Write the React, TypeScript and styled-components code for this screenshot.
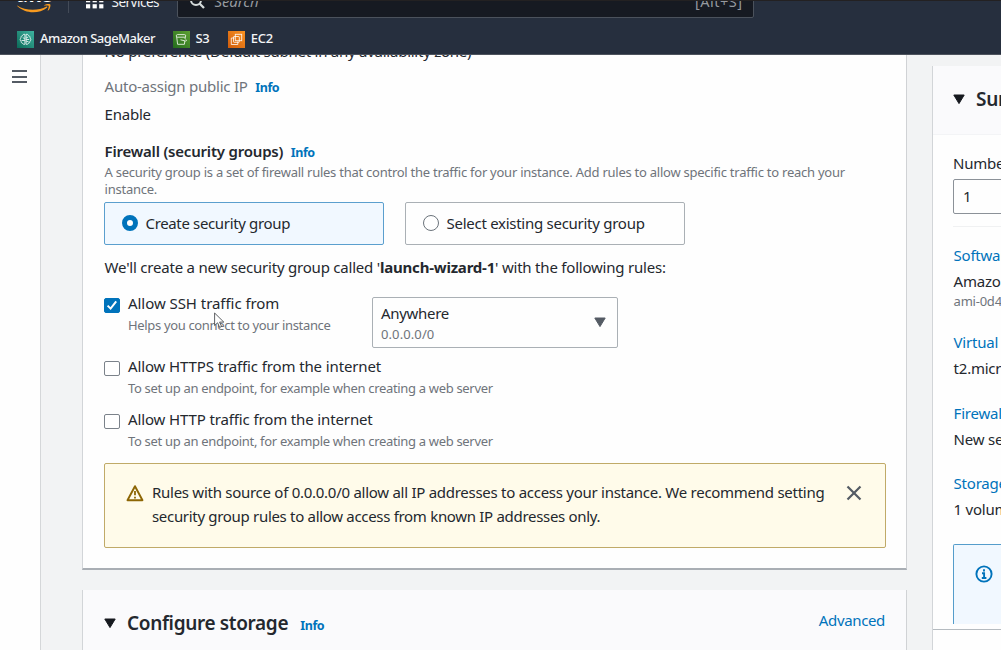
import React from "react";
import styled, { createGlobalStyle, css } from "styled-components";

const GlobalStyle = createGlobalStyle`
  * { box-sizing: border-box; }
  body {
    margin: 0;
    background: #f2f3f3;
    font-family: "Noto Sans", "Open Sans", sans-serif;
    color: #16191f;
    overflow: hidden;
  }
`;

interface TextProps {
  $size?: number;
  $line?: number;
  $track?: number;
  $color?: string;
  $bold?: boolean;
  $top?: number;
}

const textStyles = css<TextProps>`
  font-size: ${(p) => p.$size ?? 15}px;
  line-height: ${(p) => p.$line ?? 22}px;
  letter-spacing: ${(p) => p.$track ?? -0.23}px;
  color: ${(p) => p.$color ?? "#24282e"};
  font-weight: ${(p) => (p.$bold ? 600 : 400)};
  margin-top: ${(p) => p.$top ?? 0}px;
  margin-bottom: 0;
  white-space: nowrap;
`;

const Line = styled.div<TextProps>`
  ${textStyles}
`;

const Span = styled.span<TextProps>`
  ${textStyles}
`;

const Link = styled.a<TextProps>`
  ${textStyles}
  display: block;
  color: #0073bb;
  text-decoration: none;
`;

const Heading = styled.h2<TextProps>`
  ${textStyles}
  margin-left: 11px;
`;

const InfoLink = styled.a<{ $left?: number; $top?: number }>`
  margin-left: ${(p) => p.$left ?? 7.5}px;
  margin-top: ${(p) => p.$top ?? 0}px;
  font-size: 12.5px;
  line-height: 22px;
  letter-spacing: -0.4px;
  font-weight: 700;
  color: #0073bb;
`;

const Page = styled.div`
  width: 100%;
  height: 650px;
  display: flex;
  flex-direction: column;
  overflow: hidden;
`;

const Header = styled.header`
  flex: none;
  height: 55px;
  background: #262f3e;
  border-top: 1px solid #232122;
  border-bottom: 1px solid #4d535d;
  overflow: hidden;
`;

const NavRow = styled.div`
  height: 32px;
  margin-top: -15px;
  display: flex;
  align-items: stretch;
`;

const Logo = styled.div`
  width: 34px;
  height: 32px;
  margin-left: 17px;
  display: flex;
  flex-direction: column;
  align-items: center;
`;

const LogoWord = styled.span`
  color: #fff;
  font-size: 20px;
  line-height: 18px;
  height: 17px;
  letter-spacing: -0.8px;
  font-weight: 600;
`;

const NavDivider = styled.div`
  width: 1px;
  height: 27px;
  margin-left: 17px;
  background: #434b58;
`;

const Services = styled.div`
  display: flex;
  margin-left: 16.5px;
  width: 91.5px;
  gap: 8px;
`;

const SearchBox = styled.div`
  width: 577px;
  height: 32px;
  margin-left: -0.5px;
  padding: 0 10px 0 11px;
  display: flex;
  gap: 9px;
  background: #161a22;
  border: 1px solid #4b525c;
  border-radius: 2px;
`;

const SearchHint = styled.span`
  flex: 1;
  font-size: 15px;
  font-style: italic;
  line-height: 29px;
  letter-spacing: -0.1px;
  color: #95999f;
`;

const Shortcut = styled.span`
  font-size: 14.5px;
  line-height: 29px;
  letter-spacing: 0.5px;
  color: #95999f;
`;

const Favorites = styled.div`
  height: 20px;
  margin-top: 11px;
  padding-left: 17px;
  display: flex;
  align-items: center;
`;

const Favorite = styled.div<{ $gap: number }>`
  display: flex;
  align-items: center;
  gap: 6px;
  margin-right: ${(p) => p.$gap}px;
`;

const FavoriteName = styled.span<{ $track: number }>`
  padding-bottom: 2px;
  font-size: 13px;
  line-height: 18px;
  letter-spacing: ${(p) => p.$track}px;
  font-weight: 500;
  color: #f4f5f6;
  white-space: nowrap;
`;

const Body = styled.div`
  flex: 1;
  min-height: 0;
  display: flex;
  background: #f2f3f4;
`;

const Rail = styled.aside`
  flex: none;
  width: 41px;
  padding: 15px 0 0 12px;
  background: #fefefe;
  border-right: 1px solid #d5d7d9;
`;

const Bar = styled.div`
  width: 15px;
  height: 2px;
  margin-bottom: 3.5px;
  background: #545b64;
`;

const Main = styled.main`
  flex: none;
  width: 825px;
  margin-left: 41px;
  display: flex;
  flex-direction: column;
  gap: 20px;
  overflow: hidden;
`;

const Panel = styled.section`
  flex: none;
  background: #fefefe;
  border-left: 1px solid #d2d5d8;
  border-right: 1px solid #d0d2d5;
`;

const NetworkPanel = styled(Panel)`
  height: 515px;
  padding: 0 21px;
  border-bottom: 2px solid #a9aeb4;
  overflow: hidden;
`;

const NetworkText = styled.div`
  padding-left: 0.6px;
`;

const StoragePanel = styled(Panel)`
  height: 70px;
  padding: 19px 21px 0 21px;
  display: flex;
  align-items: flex-start;
  background: #fafafc;
`;

const Inline = styled.div<{ $top: number }>`
  display: flex;
  align-items: baseline;
  height: 22px;
  margin-top: ${(p) => p.$top}px;
`;

const Tiles = styled.div`
  display: flex;
  gap: 21px;
  margin-top: 5px;
`;

const Tile = styled.div<{ $on?: boolean }>`
  width: 280px;
  height: 43px;
  padding: 0 0 2px 17px;
  display: flex;
  align-items: center;
  gap: 8px;
  border-radius: 2px;
  border: 1px solid ${(p) => (p.$on ? "#5b9fce" : "#aab0b5")};
  background: ${(p) => (p.$on ? "#f1f8ff" : "#fefefe")};
`;

const Radio = styled.span<{ $on?: boolean }>`
  width: 16px;
  height: 16px;
  margin: 1px 0 0 -0.5px;
  border-radius: 50%;
  background: #fff;
  border: ${(p) => (p.$on ? "5px solid #0073bb" : "1px solid #6b737b")};
`;

const RuleRow = styled.div<{ $top: number }>`
  display: flex;
  margin-top: ${(p) => p.$top}px;
`;

const Rule = styled.div`
  display: flex;
  gap: 8px;
  width: 268px;
`;

const Box = styled.span<{ $on?: boolean }>`
  flex: none;
  width: 16px;
  height: 15px;
  margin-top: 5px;
  display: flex;
  border-radius: 2px;
  border: 1px solid ${(p) => (p.$on ? "#0073bb" : "#7b828a")};
  background: ${(p) => (p.$on ? "#0073bb" : "#fff")};
`;

const Select = styled.div`
  width: 246px;
  height: 51px;
  margin-top: 4px;
  padding: 4px 11px 0 8px;
  display: flex;
  justify-content: space-between;
  border: 1px solid #aab0b5;
  border-radius: 2px;
`;

const Arrow = styled.svg<{ $top: number }>`
  flex: none;
  margin-top: ${(p) => p.$top}px;
`;

const Alert = styled.div`
  width: 782px;
  height: 85px;
  margin-top: 13px;
  padding: 17px 23px 0 21px;
  display: flex;
  border: 1px solid #c0aa68;
  border-radius: 2px;
  background: #fffbea;
`;

const AlertText = styled.div`
  width: 695px;
  margin: -1px 0 0 8px;
`;

const Side = styled.aside`
  flex: none;
  width: 90px;
  margin: 11px 0 0 25px;
  border-left: 1px solid #d2d5d8;
  background: #fefefe;
  overflow: hidden;
`;

const SideHead = styled.div`
  height: 69px;
  padding: 20px 0 0 20px;
  display: flex;
  background: #fafafc;
  border-bottom: 1px solid #f3f4f6;
`;

const SideBody = styled.div`
  height: 494px;
  padding: 17px 0 0 20px;
  overflow: hidden;
`;

const NumberInput = styled.div`
  width: 120px;
  height: 35px;
  margin-top: 5px;
  padding: 0 0 1px 9px;
  display: flex;
  align-items: center;
  border: 1px solid #8b9198;
  border-radius: 2px;
`;

const Separator = styled.hr`
  margin: 12px 0 0;
  border: 0;
  height: 1px;
  background: #f0f1f2;
`;

const SideList = styled.div`
  padding-left: 0.6px;
`;

const SideNote = styled.div`
  width: 140px;
  height: 80px;
  margin-top: 24px;
  padding: 20px 0 0 21px;
  border: 1px solid #559dcb;
  border-bottom: 0;
  border-radius: 2px 2px 0 0;
  background: #f1f8ff;
`;

const SideFoot = styled.div`
  height: 26px;
  border-top: 1px solid #b5bbc0;
`;

const Advanced = styled(Link)`
  margin-left: auto;
`;

const Pointer = styled.svg`
  position: absolute;
  left: 214px;
  top: 312px;
`;

const muted = "#6f747b";

function DownArrow({ top, fill }: { top: number; fill: string }) {
  return (
    <Arrow $top={top} width="12" height="11" viewBox="0 0 12 11">
      <path d="M.8 1h10.400L6 9.600z" fill={fill} stroke={fill} strokeWidth="1" strokeLinejoin="round" />
    </Arrow>
  );
}

interface RuleOptionProps {
  on?: boolean;
  label: string;
  hint: string;
  track: number;
  hintTrack: number;
}

function RuleOption({ on, label, hint, track, hintTrack }: RuleOptionProps) {
  return (
    <Rule>
      <Box $on={on}>
        {on && (
          <svg width="14" height="13" viewBox="0 0 14 13">
            <path d="M2.600 6.600l3 3 5.600-7.200" fill="none" stroke="#fff" strokeWidth="2" />
          </svg>
        )}
      </Box>
      <div>
        <Line $line={20} $track={track}>{label}</Line>
        <Line $size={13} $line={18} $top={3} $track={hintTrack} $color={muted}>{hint}</Line>
      </div>
    </Rule>
  );
}

function ServiceIcon({ from, to, children }: { from: string; to: string; children: React.ReactNode }) {
  const id = "g" + from.slice(1);
  return (
    <svg width="17" height="17" viewBox="0 0 17 17">
      <defs>
        <linearGradient id={id} x1="0" y1="1" x2="1" y2="0">
          <stop offset="0" stopColor={from} />
          <stop offset="1" stopColor={to} />
        </linearGradient>
      </defs>
      <rect width="17" height="17" fill={`url(#${id})`} />
      <g fill="none" stroke="#fff" strokeOpacity=".88" strokeWidth=".9">{children}</g>
    </svg>
  );
}

function TopNav() {
  return (
    <Header>
      <NavRow>
        <Logo>
          <LogoWord>aws</LogoWord>
          <svg width="34" height="11" viewBox="0 0 34 11">
            <path d="M.3 2.400C8 7.800 21 8.200 29.500 3.600c.8-.3 1.200.5.5 1.100C22 11 8.500 11 .2 3z" fill="#f79a1f" />
            <path d="M27 2.200C29 .8 32.700.7 33.300 1.400c.5.8-.2 4.500-2.100 6.200-.4.3-.7.1-.5-.3.6-1.500 1.400-3.900.9-4.500-.5-.6-3-.4-4.300-.2-.5 0-.6-.2-.3-.4z" fill="#f79a1f" />
          </svg>
        </Logo>
        <NavDivider />
        <Services>
          <svg width="18" height="24" viewBox="0 0 18 24">
            {[0, 1, 2].map((r) =>
              [0, 1, 2].map((c) => (
                <rect key={`${r}${c}`} x={c * 6.600} y={6 + r * 6.100} width="4.200" height="4.200" fill="#fff" />
              ))
            )}
          </svg>
          <Line $size={13.5} $line={33} $track={-0.5} $color="#f1f2f3">Services</Line>
        </Services>
        <SearchBox>
          <svg width="17" height="24" viewBox="0 0 17 24">
            <circle cx="7" cy="13" r="5" fill="none" stroke="#d5dbdb" strokeWidth="2" />
            <path d="M10.500 16.500l4.500 4.500" stroke="#d5dbdb" strokeWidth="2.300" />
          </svg>
          <SearchHint>Search</SearchHint>
          <Shortcut>[Alt+S]</Shortcut>
        </SearchBox>
      </NavRow>
      <Favorites>
        <Favorite $gap={17.5}>
          <ServiceIcon from="#0b6a58" to="#3fb3a0">
            <path d="M7.900 3.300C6.300 3 5.500 4 5.400 4.800 4 5 3.700 6.200 4.100 7c-1.300.8-1.200 2.500 0 3.200-.2 1.300.7 2 1.600 2.100.4 1.200 1.500 1.400 2.200 1zM9.100 3.300c1.600-.3 2.400.7 2.500 1.500 1.400.2 1.700 1.400 1.300 2.200 1.300.8 1.200 2.500 0 3.200.2 1.300-.7 2-1.600 2.100-.4 1.200-1.500 1.400-2.200 1z" />
            <path d="M5.800 6.500l2 1.500M4.500 9.500h3.300M9.200 7l2-1M9.200 10l2.500 1M9.200 8.500h3" />
          </ServiceIcon>
          <FavoriteName $track={-0.54}>Amazon SageMaker</FavoriteName>
        </Favorite>
        <Favorite $gap={18.5}>
          <ServiceIcon from="#236b1d" to="#5da032">
            <rect x="3.300" y="3.600" width="9.400" height="2.600" rx="1.200" />
            <path d="M3.700 6l.9 7.300h6.800l.4-3.300M12.300 6l-.3 2M7.500 8.800l5 1.200c1.200.1 1.300-.8.300-1.600" />
          </ServiceIcon>
          <FavoriteName $track={-0.4}>S3</FavoriteName>
        </Favorite>
        <Favorite $gap={0}>
          <ServiceIcon from="#d05c0c" to="#f99221">
            <rect x="7.300" y="3.300" width="6.400" height="6.400" />
            <path d="M6.500 7H3.300v6.500h6.500v-3" />
            <rect x="5.500" y="5.500" width="5.800" height="5.800" rx=".6" />
          </ServiceIcon>
          <FavoriteName $track={-0.3}>EC2</FavoriteName>
        </Favorite>
      </Favorites>
    </Header>
  );
}

export default function App() {
  return (
    <>
      <GlobalStyle />
      <Page>
        <TopNav />
        <Body>
          <Rail>
            <Bar />
            <Bar />
            <Bar />
          </Rail>
          <Main>
            <NetworkPanel>
              <NetworkText>
                <Line $top={-15} $track={-0.25}>No preference (Default subnet in any availability zone)</Line>
                <Inline $top={13}>
                  <Span $color={muted}>Auto-assign public IP</Span>
                  <InfoLink>Info</InfoLink>
                </Inline>
                <Line $top={6}>Enable</Line>
                <Inline $top={15}>
                  <Span $bold $track={-0.2}>Firewall (security groups)</Span>
                  <InfoLink>Info</InfoLink>
                </Inline>
                <Line $size={13} $line={16.5} $track={-0.25} $color={muted} $top={2}>
                  A security group is a set of firewall rules that control the traffic for your instance. Add rules to allow specific traffic to reach your
                  <br />
                  instance.
                </Line>
              </NetworkText>
              <Tiles>
                <Tile $on>
                  <Radio $on />
                  <Span $track={-0.35}>Create security group</Span>
                </Tile>
                <Tile>
                  <Radio />
                  <Span $track={-0.27}>Select existing security group</Span>
                </Tile>
              </Tiles>
              <NetworkText>
                <Line $top={11} $track={-0.21}>
                  We'll create a new security group called '<b>launch-wizard-1</b>' with the following rules:
                </Line>
              </NetworkText>
              <RuleRow $top={15}>
                <RuleOption on label="Allow SSH traffic from" hint="Helps you connect to your instance" track={-0.05} hintTrack={-0.34} />
                <Select>
                  <div>
                    <Line $track={-0.3}>Anywhere</Line>
                    <Line $size={13} $line={20} $track={0.1} $color={muted}>0.0.0.0/0</Line>
                  </div>
                  <DownArrow top={15} fill="#545b64" />
                </Select>
              </RuleRow>
              <RuleRow $top={8}>
                <RuleOption label="Allow HTTPS traffic from the internet" hint="To set up an endpoint, for example when creating a web server" track={-0.12} hintTrack={-0.32} />
              </RuleRow>
              <RuleRow $top={12}>
                <RuleOption label="Allow HTTP traffic from the internet" hint="To set up an endpoint, for example when creating a web server" track={-0.13} hintTrack={-0.32} />
              </RuleRow>
              <Alert>
                <svg width="18" height="24" viewBox="0 0 18 24">
                  <path d="M9 5.200L16.500 19.300H1.500z" fill="none" stroke="#8d6605" strokeWidth="1.900" strokeLinejoin="round" />
                  <path d="M9 10v4.300M9 15.700v1.800" stroke="#8d6605" strokeWidth="1.800" />
                </svg>
                <AlertText>
                  <Line $line={24} $track={-0.27}>
                    Rules with source of 0.0.0.0/0 allow all IP addresses to access your instance. We recommend setting
                  </Line>
                  <Line $line={24} $track={-0.31}>
                    security group rules to allow access from known IP addresses only.
                  </Line>
                </AlertText>
                <svg width="16" height="24" viewBox="0 0 16 24">
                  <path d="M1.500 5.500l13 13M14.500 5.500l-13 13" stroke="#545b64" strokeWidth="2.200" />
                </svg>
              </Alert>
            </NetworkPanel>
            <StoragePanel>
              <DownArrow top={9} fill="#16191f" />
              <Heading $size={19} $line={28} $track={-0.35} $bold>Configure storage</Heading>
              <InfoLink $left={12} $top={6}>Info</InfoLink>
              <Advanced $track={-0.35}>Advanced</Advanced>
            </StoragePanel>
          </Main>
          <Side>
            <SideHead>
              <DownArrow top={8} fill="#16191f" />
              <Heading $size={19} $line={26} $track={-0.3} $bold>Summary</Heading>
            </SideHead>
            <SideBody>
              <Line>Number of instances</Line>
              <NumberInput>
                <Span>1</Span>
              </NumberInput>
              <Separator />
              <SideList>
                <Link $top={17}>Software Image (AMI)</Link>
                <Line $top={4}>Amazon Linux</Line>
                <Line $size={13} $line={18} $color={muted}>ami-0d4</Line>
                <Link $top={21}>Virtual server type</Link>
                <Line $top={4}>t2.micro</Line>
                <Link $top={23}>Firewall (security group)</Link>
                <Line $top={4}>New security group</Line>
                <Link $top={22}>Storage (volumes)</Link>
                <Line $top={4}>1 volume(s)</Line>
              </SideList>
              <SideNote>
                <svg width="18" height="18" viewBox="0 0 18 18">
                  <circle cx="9" cy="9" r="7.600" fill="none" stroke="#0073bb" strokeWidth="1.900" />
                  <path d="M9 4.200v2.200M7 8.200h2.100V13M6.800 13h4.600" fill="none" stroke="#0073bb" strokeWidth="1.900" />
                </svg>
              </SideNote>
            </SideBody>
            <SideFoot />
          </Side>
        </Body>
        <Pointer width="12" height="17" viewBox="0 0 12 17">
          <path d="M.6 1v12.500l3-2.700 2 4.600 2-.9-2-4.400h4.200z" fill="#fff" stroke="#35383c" strokeWidth=".8" />
        </Pointer>
      </Page>
    </>
  );
}
